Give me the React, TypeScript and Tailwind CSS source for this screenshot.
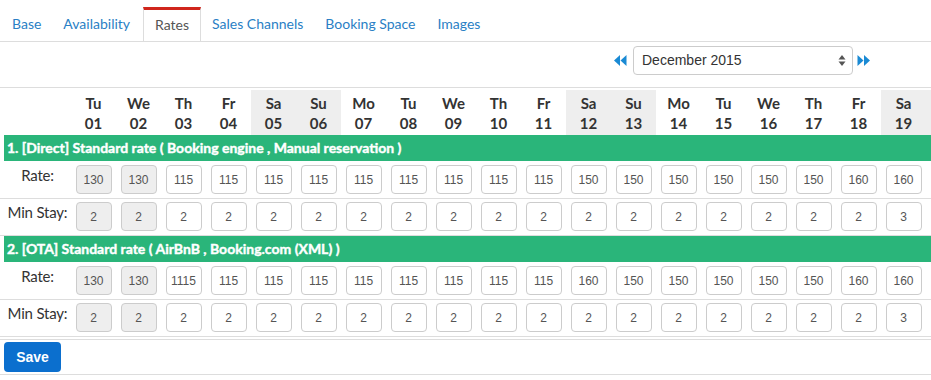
import React from 'react';

const tabs = ['Base', 'Availability', 'Rates', 'Sales Channels', 'Booking Space', 'Images'];
const dayNames = ['Tu', 'We', 'Th', 'Fr', 'Sa', 'Su', 'Mo'];

const days = Array.from({ length: 31 }, (_, i) => {
  const name = dayNames[i % 7];
  return { name, num: String(i + 1).padStart(2, '0'), weekend: name === 'Sa' || name === 'Su' };
});

const pad = (arr: number[], fill: number) => [...arr, ...Array(31 - arr.length).fill(fill)];

const plans = [
  {
    title: '1. [Direct] Standard rate ( Booking engine , Manual reservation )',
    rates: pad([130, 130, 115, 115, 115, 115, 115, 115, 115, 115, 115, 150, 150, 150, 150, 150, 150, 160, 160], 160),
    stays: pad([2, 2, 2, 2, 2, 2, 2, 2, 2, 2, 2, 2, 2, 2, 2, 2, 2, 2, 3], 2),
  },
  {
    title: '2. [OTA] Standard rate ( AirBnB , Booking.com (XML) )',
    rates: pad([130, 130, 1115, 115, 115, 115, 115, 115, 115, 115, 115, 160, 150, 150, 150, 150, 150, 160, 160], 160),
    stays: pad([2, 2, 2, 2, 2, 2, 2, 2, 2, 2, 2, 2, 2, 2, 2, 2, 2, 2, 3], 2),
  },
];

function Cell({ value, disabled }: { value: number; disabled: boolean }) {
  return (
    <div className="w-[45px] shrink-0 flex justify-center">
      <div
        className={`w-[36px] h-[29px] rounded-[4px] border border-[#cccccc] flex items-center justify-center text-[12px] text-[#555] font-['Liberation_Sans',Arial,sans-serif] ${
          disabled ? 'bg-[#eeeeee]' : 'bg-white'
        }`}
      >
        {value}
      </div>
    </div>
  );
}

function InputRow({ label, values, last }: { label: string; values: number[]; last?: boolean }) {
  return (
    <div className={`flex pl-[4px] border-b border-[#dddddd] ${last ? 'pt-[3px] pb-[4px]' : 'pt-[4px] pb-[4px]'}`}>
      <div className="w-[67px] shrink-0 text-center text-[15px] leading-[21px] text-[#333] tracking-[-0.2px]">{label}</div>
      {values.map((v, i) => (
        <Cell key={i} value={v} disabled={i < 2} />
      ))}
    </div>
  );
}

function DoubleArrow({ dir }: { dir: 'left' | 'right' }) {
  return (
    <svg width="13" height="11" viewBox="0 0 13 11" className="mt-[9px]">
      {dir === 'left' ? (
        <g fill="#1a8ad4">
          <polygon points="6,0 6,11 0,5.5" />
          <polygon points="12.5,0 12.5,11 6.5,5.5" />
        </g>
      ) : (
        <g fill="#1a8ad4">
          <polygon points="0.5,0 0.5,11 6.5,5.5" />
          <polygon points="7,0 7,11 13,5.5" />
        </g>
      )}
    </svg>
  );
}

export default function App() {
  return (
    <div className="w-[931px] h-[380px] overflow-hidden bg-white font-['Lato','Noto_Sans',sans-serif]">
      {/* tabs */}
      <div className="flex pt-[7px] pl-px border-b border-[#dddddd]">
        {tabs.map(t =>
          t === 'Rates' ? (
            <div
              key={t}
              className="h-[34px] -mb-px ml-[2px] px-[11px] pt-[5px] border-t-[3px] border-t-[#d0261c] border-x border-x-[#dddddd] bg-white text-[14px] leading-[20px] text-[#555]"
            >
              {t}
            </div>
          ) : (
            <div key={t} className="h-[34px] px-[11px] pt-[7px] text-[14px] leading-[20px] text-[#2a7fc5]">
              {t}
            </div>
          )
        )}
      </div>

      {/* month selector */}
      <div className="h-[46px] flex justify-end items-start pr-[61px] pt-[4px] border-b border-[#dddddd]">
        <DoubleArrow dir="left" />
        <div className="ml-[6px] mr-[4px] w-[220px] h-[29px] rounded-[4px] border border-[#cccccc] flex items-center justify-between pl-[8px] pr-[6px] font-['Liberation_Sans',Arial,sans-serif] text-[14px] text-[#333]">
          <span>December 2015</span>
          <svg width="8" height="13" viewBox="0 0 8 13">
            <polygon points="4,1 7.5,5.5 0.5,5.5" fill="#555" />
            <polygon points="4,12 7.5,7.5 0.5,7.5" fill="#555" />
          </svg>
        </div>
        <DoubleArrow dir="right" />
      </div>

      {/* table */}
      <div className="mt-[2px]">
        <div className="flex pl-[4px]">
          <div className="w-[67px] shrink-0" />
          {days.map(d => (
            <div
              key={d.num}
              className={`w-[45px] h-[45px] shrink-0 pt-[3px] text-center text-[15px] leading-[20px] font-bold text-[#333] ${
                d.weekend ? 'bg-[#eeeeee]' : ''
              }`}
            >
              <div>{d.name}</div>
              <div>{d.num}</div>
            </div>
          ))}
        </div>

        {plans.map(p => (
          <div key={p.title}>
            <div className="ml-[4px] h-[26px] bg-[#2ab57a] pl-[3px] text-white font-bold text-[14px] leading-[26px] whitespace-nowrap [-webkit-text-stroke:0.4px_white]">
              {p.title}
            </div>
            <InputRow label="Rate:" values={p.rates} />
            <InputRow label="Min Stay:" values={p.stays} last />
          </div>
        ))}
      </div>

      {/* save */}
      <div className="mt-[2px] border-t border-[#dddddd] pt-[2px] pb-[2px] pl-[4px] border-b">
        <button className="w-[57px] h-[30px] rounded-[4px] bg-[#0b6fce] text-white font-bold text-[14px] font-['Liberation_Sans',Arial,sans-serif]">
          Save
        </button>
      </div>
    </div>
  );
}
